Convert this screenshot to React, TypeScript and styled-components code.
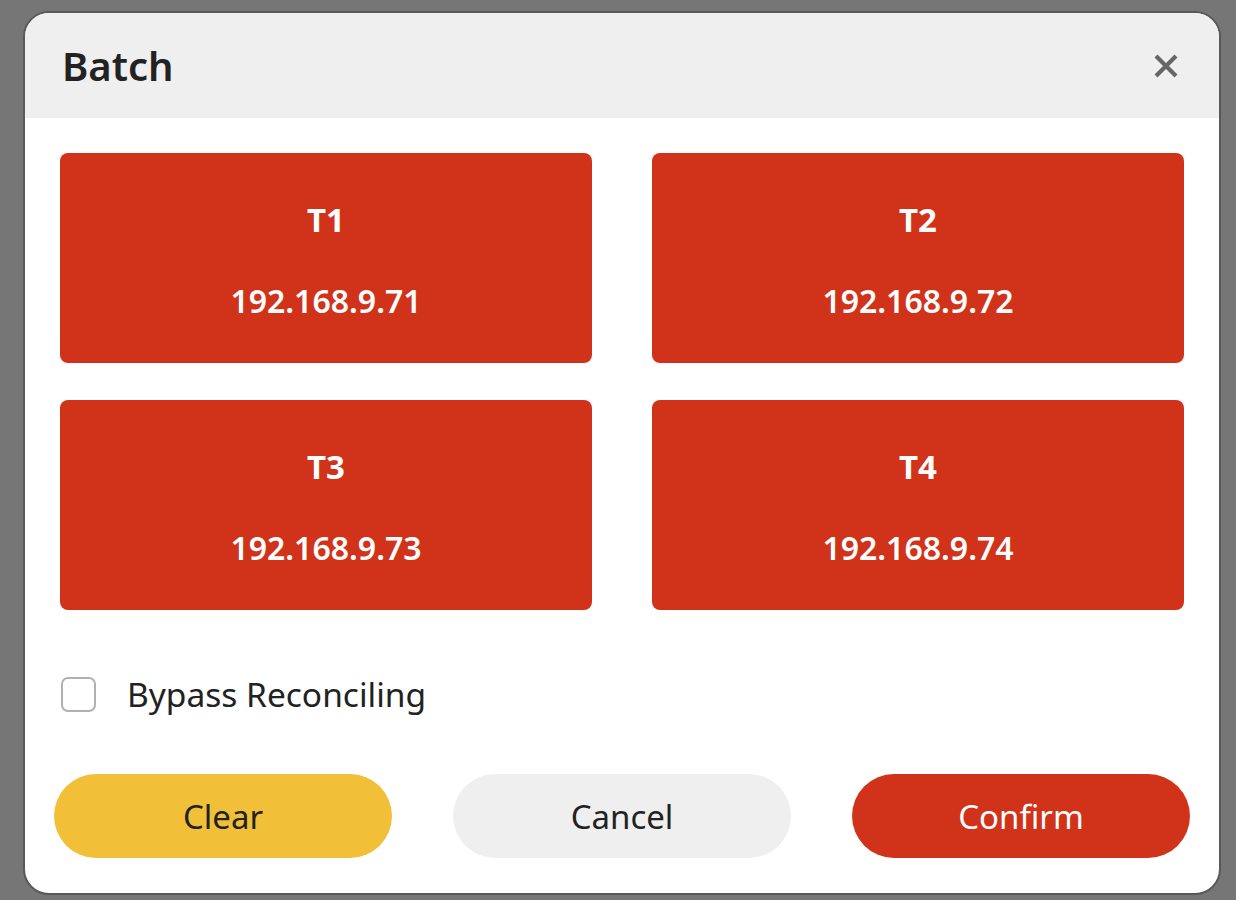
import React, {useState} from "react";
import styled, {createGlobalStyle} from "styled-components";

const GlobalStyle = createGlobalStyle`
    html, body {
        margin: 0;
        padding: 0;
        background-color: #767676;
        font-family: 'Noto Sans', 'Open Sans', sans-serif;
    }
`;

const Page = styled.div`
    box-sizing: border-box;
    height: 900px;
    padding: 11px 15px 0 23px;
`;

const Modal = styled.div`
    box-sizing: border-box;
    width: 1198px;
    height: 884px;
    display: flex;
    flex-direction: column;
    background-color: #fff;
    border: 2px solid #595959;
    border-radius: 26px;
    overflow: hidden;
`;

const Header = styled.div`
    height: 105px;
    flex-shrink: 0;
    display: flex;
    align-items: center;
    justify-content: space-between;
    padding: 0 38px 0 37px;
    background-color: #efefef;
`;

const Title = styled.h1`
    margin: 0;
    font-size: 40px;
    font-weight: 600;
    color: #222;
`;

const CloseBtn = styled.button`
    width: 30px;
    height: 30px;
    padding: 0;
    border: none;
    background: transparent;
    display: flex;
    align-items: center;
    justify-content: center;
    cursor: pointer;
`;

const Body = styled.div`
    flex: 1;
    display: flex;
    flex-direction: column;
    padding: 35px 35px 35px;
`;

const Grid = styled.div`
    display: grid;
    grid-template-columns: 1fr 1fr;
    grid-auto-rows: 210px;
    column-gap: 60px;
    row-gap: 37px;
`;

const Terminal = styled.div`
    display: flex;
    flex-direction: column;
    align-items: center;
    justify-content: center;
    gap: 49px;
    padding-top: 3px;
    background-color: #d1321a;
    border-radius: 8px;
    color: #fff;
    cursor: pointer;
`;

const TerminalName = styled.div`
    font-size: 33px;
    font-weight: 700;
    line-height: 1;
`;

const TerminalIp = styled.div`
    font-size: 32px;
    font-weight: 600;
    line-height: 1;
`;

const CheckRow = styled.label`
    display: flex;
    align-items: center;
    gap: 31px;
    margin-top: 61px;
    padding-left: 1px;
    cursor: pointer;
`;

const Box = styled.span<{ $checked: boolean }>`
    box-sizing: border-box;
    width: 35px;
    height: 35px;
    border: 2px solid #aeb1b7;
    border-radius: 7px;
    background-color: ${p => p.$checked ? '#d1321a' : '#fff'};
`;

const CheckLabel = styled.span`
    font-size: 33.5px;
    color: #222;
`;

const Actions = styled.div`
    display: flex;
    gap: 61px;
    margin: auto -6px 0;
`;

const Pill = styled.button<{ $bg: string; $fg: string }>`
    flex: 1;
    height: 84px;
    border: none;
    border-radius: 42px;
    background-color: ${p => p.$bg};
    color: ${p => p.$fg};
    font-family: inherit;
    font-size: 33px;
    cursor: pointer;
`;

const terminals = [
    {name: 'T1', ip: '192.168.9.71'},
    {name: 'T2', ip: '192.168.9.72'},
    {name: 'T3', ip: '192.168.9.73'},
    {name: 'T4', ip: '192.168.9.74'},
];

const App = () => {
    const [bypass, setBypass] = useState(false);

    return (
        <Page>
            <GlobalStyle/>
            <Modal>
                <Header>
                    <Title>Batch</Title>
                    <CloseBtn aria-label="Close">
                        <svg width="26" height="26" viewBox="0 0 26 26">
                            <path d="M3 3 L23 23 M23 3 L3 23" stroke="#666" strokeWidth="4.2"/>
                        </svg>
                    </CloseBtn>
                </Header>
                <Body>
                    <Grid>
                        {terminals.map(t => (
                            <Terminal key={t.name}>
                                <TerminalName>{t.name}</TerminalName>
                                <TerminalIp>{t.ip}</TerminalIp>
                            </Terminal>
                        ))}
                    </Grid>
                    <CheckRow onClick={() => setBypass(!bypass)}>
                        <Box $checked={bypass}/>
                        <CheckLabel>Bypass Reconciling</CheckLabel>
                    </CheckRow>
                    <Actions>
                        <Pill $bg="#f2bf38" $fg="#222">Clear</Pill>
                        <Pill $bg="#efefef" $fg="#222">Cancel</Pill>
                        <Pill $bg="#d1321a" $fg="#fff">Confirm</Pill>
                    </Actions>
                </Body>
            </Modal>
        </Page>
    );
};

export default App;
